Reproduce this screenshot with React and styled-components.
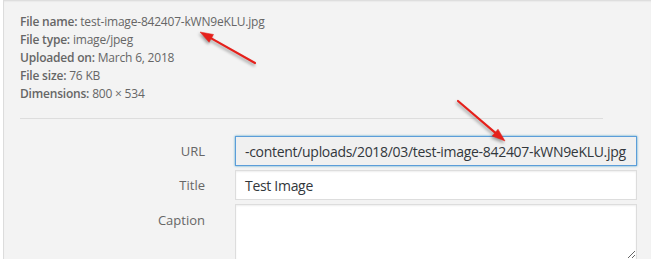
import React from "react"
import styled, { createGlobalStyle } from 'styled-components';

const GlobalStyle = createGlobalStyle`
  html, body {
    margin: 0;
    padding: 0;
    background: #fff;
  }
  * { box-sizing: border-box; }
`

const Frame = styled.div`
  position: relative;
  margin-left: 3px;
  height: 259px;
  overflow: hidden;
  background: #f3f3f3;
  border-left: 1px solid #dcdcdc;
  box-shadow: inset 0 2px 2px -1px rgba(0,0,0,0.12);
  font-family: "Open Sans", "Noto Sans", sans-serif;
`

const Details = styled.div`
  padding: 13px 48px 0 16px;
  font-size: 12px;
  line-height: 18px;
  letter-spacing: -0.2px;
  color: #666;
`

const InfoLine = styled.div`
  white-space: nowrap;
  strong {
    font-weight: 600;
    color: #666;
  }
`

const Divider = styled.div`
  margin-top: 15px;
  height: 1px;
  background: #dddddd;
`

const Form = styled.div`
  display: flex;
  flex-direction: column;
  gap: 4px;
  padding: 17px 14px 0 16px;
`

const Row = styled.label`
  display: grid;
  grid-template-columns: 185px 1fr;
  column-gap: 30px;
  align-items: ${({top}) => top ? "start" : "center"};
`

const Label = styled.span`
  text-align: right;
  font-size: 13px;
  color: #666;
  padding-top: ${({top}) => top ? "7px" : "0"};
`

const Field = styled.div`
  height: 30px;
  padding: 0 9px;
  display: flex;
  align-items: center;
  overflow: hidden;
  white-space: nowrap;
  font-size: 14px;
  letter-spacing: -0.3px;
  color: #32373c;
  background: ${({readOnly}) => readOnly ? "#f0f0f0" : "#fff"};
  border: 1px solid ${({focused}) => focused ? "#5b9dd9" : "#dddddd"};
  box-shadow: ${({focused}) => focused ? "0 0 2px rgba(30,140,190,0.8)" : "inset 0 1px 2px rgba(0,0,0,0.07)"};
`

const Area = styled.textarea`
  display: block;
  width: 100%;
  height: 56px;
  margin: 0;
  border: 1px solid #dddddd;
  background: #fff;
  box-shadow: inset 0 1px 2px rgba(0,0,0,0.07);
  font-family: inherit;
  font-size: 14px;
  resize: vertical;
  outline: none;
`

const Arrows = styled.svg`
  position: absolute;
  left: -4px;
  top: 0;
  width: 651px;
  height: 259px;
  pointer-events: none;
  filter: drop-shadow(-1px 2px 1.5px rgba(0,0,0,0.35));
`

const Arrow = ({x1, y1, x2, y2}) => {
  const ang = Math.atan2(y2 - y1, x2 - x1)
  const len = 13, half = 4.5
  const bx = x2 - Math.cos(ang) * len, by = y2 - Math.sin(ang) * len
  const px = -Math.sin(ang) * half, py = Math.cos(ang) * half
  return (
    <g fill="#e5201b" stroke="#e5201b">
      <line x1={x1} y1={y1} x2={bx} y2={by} strokeWidth="2.2" strokeLinecap="round" />
      <polygon points={`${x2},${y2} ${bx + px},${by + py} ${bx - px},${by - py}`} strokeWidth="0.5" />
    </g>
  )
}

const info = [
  ["File name:", "test-image-842407-kWN9eKLU.jpg"],
  ["File type:", "image/jpeg"],
  ["Uploaded on:", "March 6, 2018"],
  ["File size:", "76 KB"],
  ["Dimensions:", "800 × 534"],
]

export default function App() {
  return (
    <>
      <GlobalStyle />
      <Frame>
        <Details>
          {info.map(([k, v]) => (
            <InfoLine key={k}><strong>{k}</strong> {v}</InfoLine>
          ))}
          <Divider />
        </Details>
        <Form>
          <Row>
            <Label>URL</Label>
            <Field focused readOnly>-content/uploads/2018/03/test-image-842407-kWN9eKLU.jpg</Field>
          </Row>
          <Row>
            <Label>Title</Label>
            <Field>Test Image</Field>
          </Row>
          <Row top>
            <Label top>Caption</Label>
            <Area />
          </Row>
        </Form>
        <Arrows viewBox="0 0 651 259">
          <Arrow x1={255} y1={63} x2={200} y2={32} />
          <Arrow x1={458} y1={101} x2={505} y2={141} />
        </Arrows>
      </Frame>
    </>
  )
}
